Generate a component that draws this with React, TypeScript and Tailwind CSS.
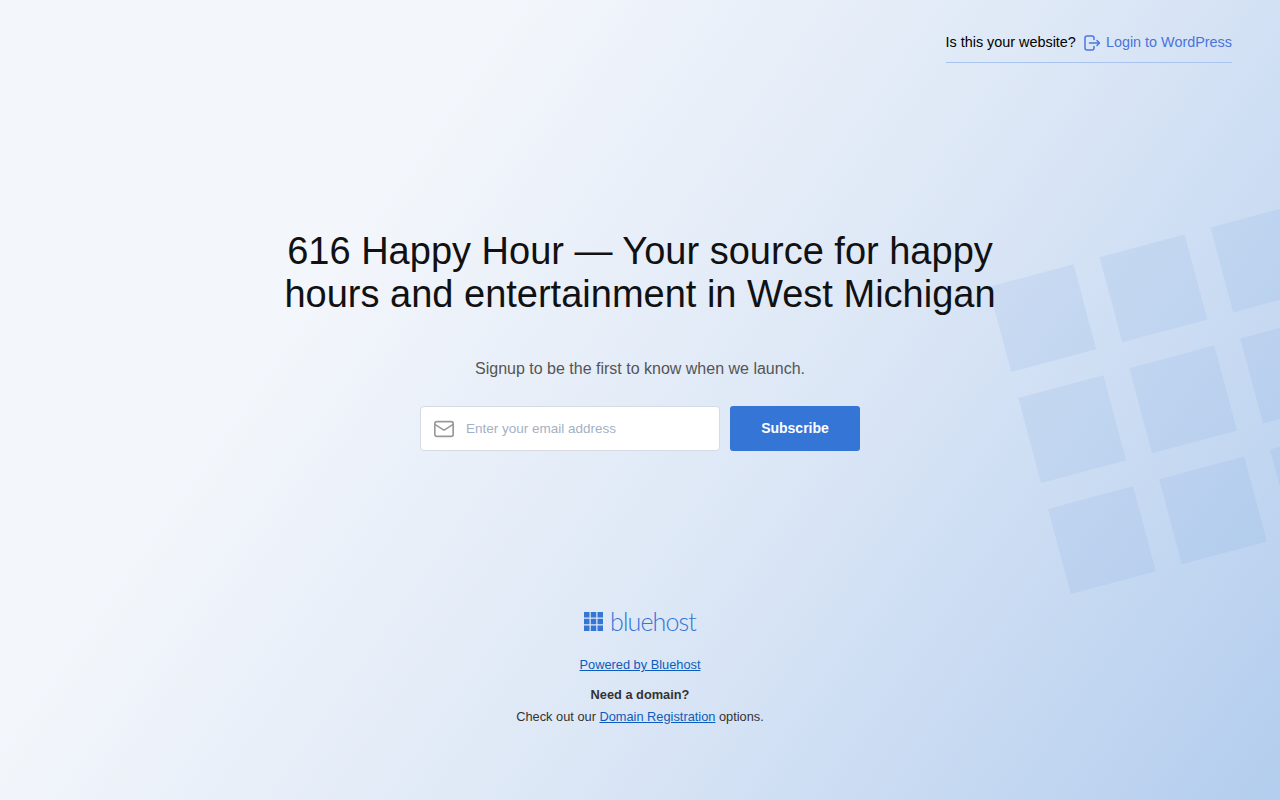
import React from 'react';
import { Mail } from 'lucide-react';

const tiles: [number, number][] = [
    [0, 0], [0, 1], [0, 2],
    [1, 0], [1, 1], [1, 2],
    [2, 0], [2, 1], [2, 2],
];

// Faded blue tiles behind the right side of the page
const BackgroundTiles: React.FC = () => (
    <svg className="absolute top-0 left-0" width="1280" height="800" viewBox="0 0 1280 800" aria-hidden="true">
        {tiles.map(([row, col]) => (
            <rect
                key={`${row}-${col}`}
                width="88"
                height="88"
                fill="#6f9fe0"
                fillOpacity="0.12"
                transform={`translate(${988.5 + col * 111 + row * 29.8} ${287 - col * 29.8 + row * 111}) rotate(-15)`}
            />
        ))}
    </svg>
);

const LoginIcon: React.FC = () => (
    <svg width="16" height="16" viewBox="0 0 16 16" fill="none" stroke="#4a78dc" strokeWidth="1.5" strokeLinecap="round" strokeLinejoin="round" aria-hidden="true">
        <path d="M10 4.5V3a2 2 0 0 0-2-2H3a2 2 0 0 0-2 2v10a2 2 0 0 0 2 2h5a2 2 0 0 0 2-2v-1.5" />
        <path d="M5.5 8h10M13 5.5L15.5 8 13 10.5" />
    </svg>
);

const BluehostLogo: React.FC = () => (
    <div className="flex items-center justify-center gap-[7px] h-[24px]">
        <svg width="19" height="19" viewBox="0 0 19 19" aria-hidden="true">
            {[0, 1, 2].map((row) =>
                [0, 1, 2].map((col) => (
                    <rect key={`${row}-${col}`} x={col * 6.75} y={row * 6.75} width="5.5" height="5.5" fill="#3575d6" />
                ))
            )}
        </svg>
        <span className="text-[25px] leading-[24px] font-light tracking-[-0.9px] text-[#3575d6] font-['Lato',sans-serif]">bluehost</span>
    </div>
);

export default function App() {
    return (
        <div className="relative min-h-screen h-[800px] overflow-hidden bg-[linear-gradient(125deg,#f3f6fb_28%,#dce7f6_60%,#b3cdee_100%)] font-['Liberation_Sans',Arial,sans-serif]">
            <BackgroundTiles />

            <div className="relative">
                {/* Header */}
                <div className="flex justify-end pr-[48px] pt-[27px]">
                    <div className="flex items-center h-[32px] border-b border-[#a9c4f0] pb-[3px] box-content text-[14.4px]">
                        <span className="text-black">Is this your website?</span>
                        <a href="#" className="flex items-center gap-[6px] ml-[8px] text-[#4a74d9]">
                            <LoginIcon />
                            Login to WordPress
                        </a>
                    </div>
                </div>

                {/* Coming soon content */}
                <div className="flex flex-col items-center mt-[167px]">
                    <h1 className="w-[760px] text-center text-[38px] leading-[43px] font-normal text-[#111]">
                        616 Happy Hour — Your source for happy hours and entertainment in West Michigan
                    </h1>
                    <p className="mt-[41px] text-[16px] leading-[24px] text-[#555]">
                        Signup to be the first to know when we launch.
                    </p>
                    <form className="flex gap-[10px] mt-[25px]">
                        <div className="flex items-center w-[300px] h-[45px] bg-white border border-[#d5dae3] rounded-[4px] pl-[12px]">
                            <Mail size={22} strokeWidth={1.8} className="text-[#999]" />
                            <input
                                placeholder="Enter your email address"
                                className="ml-[11px] flex-1 pt-[1px] text-[13.5px] outline-none placeholder:text-[#a3b1c6]"
                            />
                        </div>
                        <button type="button" className="w-[130px] h-[45px] bg-[#3575d6] rounded-[3px] text-white text-[14px] font-bold">
                            Subscribe
                        </button>
                    </form>
                </div>

                {/* Footer */}
                <div className="flex flex-col items-center mt-[158px] text-[12.8px] text-[#333]">
                    <BluehostLogo />
                    <a href="#" className="mt-[23px] leading-[18px] text-[#0b5cbe] underline">Powered by Bluehost</a>
                    <p className="mt-[12px] leading-[18px] font-bold">Need a domain?</p>
                    <p className="mt-[4px] leading-[18px]">
                        Check out our <a href="#" className="text-[#0b5cbe] underline">Domain Registration</a> options.
                    </p>
                </div>
            </div>
        </div>
    );
}
